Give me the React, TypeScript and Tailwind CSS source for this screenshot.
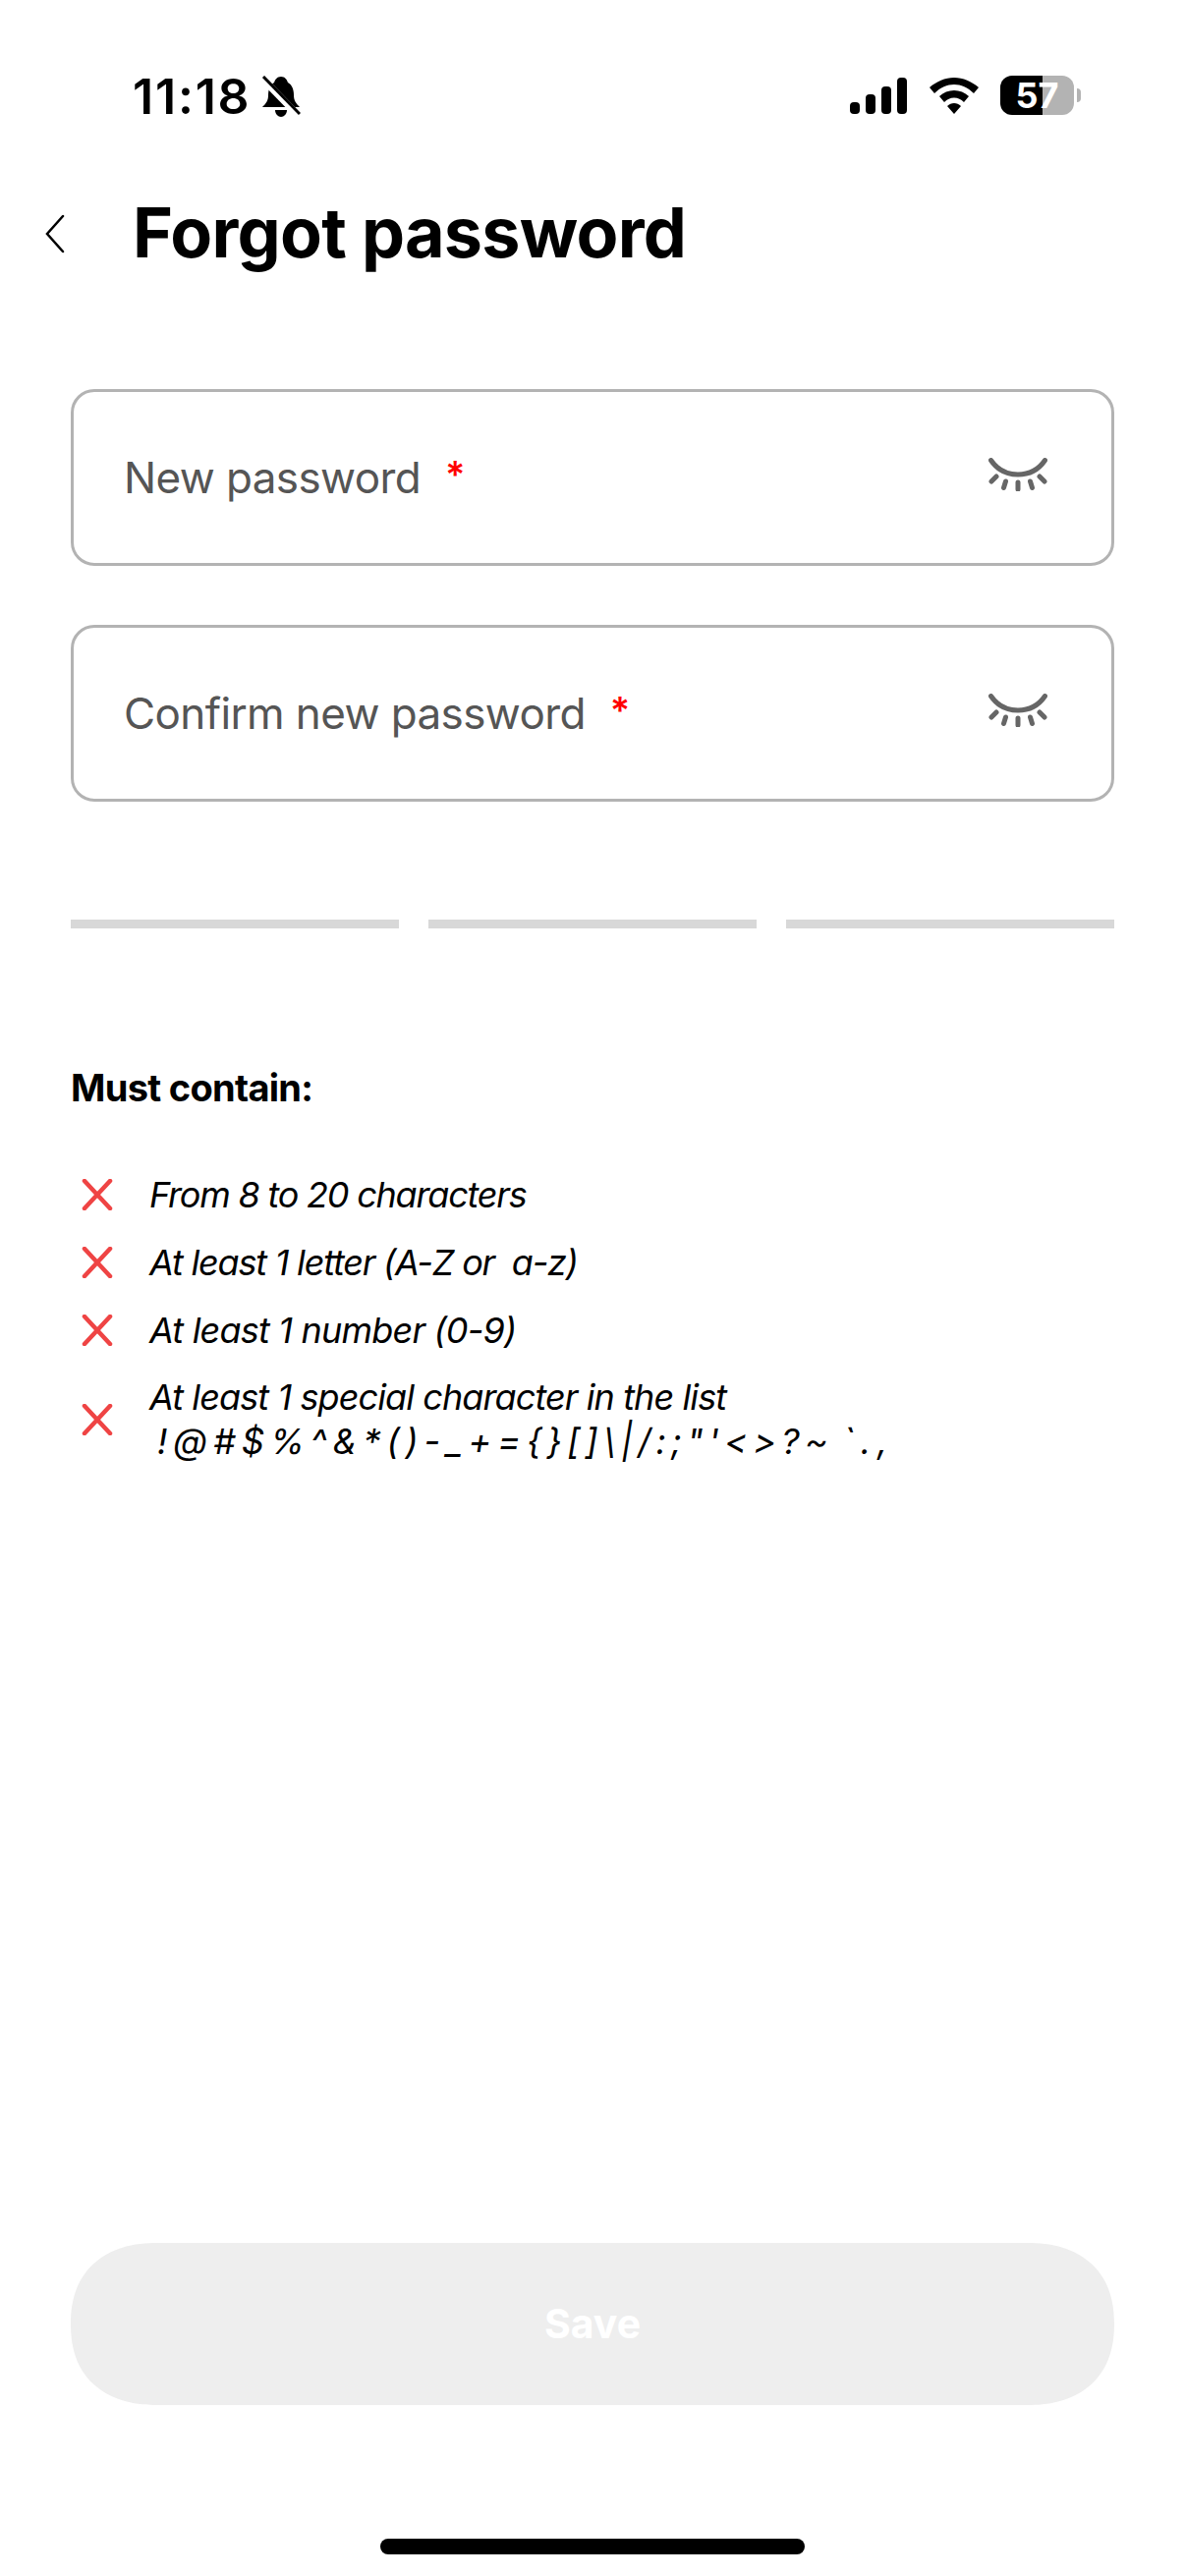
import React from "react";

const Eye = () => (
  <svg width="60" height="34" viewBox="0 0 60 34" fill="none" stroke="#666666" strokeLinecap="round" className="shrink-0">
    <path d="M2.500 2.500C9 12 18 17 30 17C42 17 51 12 57.500 2.500" strokeWidth="5" />
    <path d="M3 24L8 19M15.500 30.500L17.500 24M30 32V25M44.500 30.500L42.500 24M57 24L52 19" strokeWidth="5" />
  </svg>
);

const Cross = () => (
  <svg width="32" height="32" viewBox="0 0 32 32" fill="none" stroke="#ef4444" strokeWidth="4.500" strokeLinecap="round" className="shrink-0">
    <path d="M3 2L29 30M29 2L3 30" />
  </svg>
);

const Field = ({ label }: { label: string }) => (
  <div className="h-[180px] rounded-[24px] border-[3px] border-[#b3b3b3] pl-[51px] pr-[65px] flex items-center justify-between">
    <div className="flex items-center">
      <span className="text-[44px] leading-none tracking-[-0.6px] text-[#555555]">{label}</span>
      <span className="ml-[25px] -mt-[6px] text-[38px] leading-none font-semibold text-[#ff0000]">*</span>
    </div>
    <div className="-mt-[6px] flex"><Eye /></div>
  </div>
);

const Rule = ({ text, track }: { text: string; track: string }) => (
  <div className="flex items-center h-[69px]">
    <div className="w-[80px] pl-[11px] flex"><Cross /></div>
    <span className={`text-[36px] leading-none italic whitespace-pre text-black ${track}`}>{text}</span>
  </div>
);

export default function App() {
  return (
    <div className="w-[1206px] h-[2622px] bg-white flex flex-col font-['Inter','Liberation_Sans',sans-serif] overflow-hidden">
      <div className="h-[190px] flex items-start justify-between pt-[73px] pl-[135px] pr-[106px]">
        <div className="flex items-center">
          <span className="text-[50px] leading-[50px] font-semibold tracking-[1.8px] text-black">11:18</span>
          <svg width="40" height="42" viewBox="0 0 40 42" className="ml-[11px]">
            <path d="M20 1C24 1 26 4 27 7C31 9 33 14 33 20C33 25 35 28 39 32H1C5 28 7 25 7 20C7 14 9 9 13 7C14 4 16 1 20 1Z" fill="black" />
            <path d="M14 35H26C26 39 23 42 20 42C17 42 14 39 14 35Z" fill="black" />
            <path d="M1 3L38 41" stroke="white" strokeWidth="7" />
            <path d="M2 1L39 39" stroke="black" strokeWidth="3" />
          </svg>
        </div>
        <div className="flex items-center pt-[4px]">
          <svg width="58" height="37" viewBox="0 0 58 37">
            <rect x="0" y="25" width="10" height="12" rx="4" fill="black" />
            <rect x="16" y="17" width="10" height="20" rx="4" fill="black" />
            <rect x="32" y="9" width="10" height="28" rx="4" fill="black" />
            <rect x="48" y="0" width="10" height="37" rx="4" fill="black" />
          </svg>
          <svg width="50" height="37" viewBox="0 0 50 37" className="ml-[23px]">
            <path d="M25 0C34 0 43 4 50 10L45 16C39 10 32 7 25 7C18 7 11 10 5 16L0 10C7 4 16 0 25 0Z" fill="black" />
            <path d="M25 13C30.500 13 36 15 40 19L35 25C32 22 29 20.500 25 20.500C21 20.500 18 22 15 25L10 19C14 15 19.500 13 25 13Z" fill="black" />
            <path d="M25 26C27.500 26 30 27 32 29L25 37L18 29C20 27 22.500 26 25 26Z" fill="black" />
          </svg>
          <div className="relative ml-[22px] w-[75px] h-[40px] flex">
            <div className="w-[43px] bg-black rounded-l-[12px]" />
            <div className="w-[32px] bg-[#b3b3b3] rounded-r-[12px]" />
            <span className="absolute inset-0 flex items-center justify-center text-[36px] leading-[40px] font-bold text-white">57</span>
          </div>
          <div className="ml-[3px] w-[4px] h-[14px] rounded-r-full bg-[#b3b3b3]" />
        </div>
      </div>

      <div className="h-[96px] flex items-center pl-[46px]">
        <svg width="20" height="40" viewBox="0 0 20 40" fill="none" stroke="black" strokeWidth="2.500" strokeLinecap="round" className="shrink-0">
          <path d="M18 2L2 20L18 38" />
        </svg>
        <h1 className="ml-[69px] -mt-[3px] text-[70px] leading-none font-bold tracking-[-0.75px] text-black">Forgot password</h1>
      </div>

      <div className="mx-[72px] mt-[110px] flex flex-col gap-[60px]">
        <Field label="New password" />
        <Field label="Confirm new password" />
      </div>

      <div className="mx-[72px] mt-[120px] grid grid-cols-3 gap-[30px]">
        <div className="h-[9px] bg-[#d8d8d8]" />
        <div className="h-[9px] bg-[#d8d8d8]" />
        <div className="h-[9px] bg-[#d8d8d8]" />
      </div>

      <div className="mx-[72px] mt-[140px] text-[38px] leading-[44px] font-bold tracking-[-0.7px] text-black">Must contain:</div>

      <div className="mx-[72px] mt-[52px] flex flex-col">
        <Rule text="From 8 to 20 characters" track="tracking-[-1.2px]" />
        <Rule text="At least 1 letter (A-Z or  a-z)" track="tracking-[-1.2px]" />
        <Rule text="At least 1 number (0-9)" track="tracking-[-0.8px]" />
        <div className="flex items-center mt-[12px]">
          <div className="w-[80px] pl-[11px] flex"><Cross /></div>
          <div className="flex flex-col text-[36px] leading-[45px] italic tracking-[-1px] text-black">
            <span className="tracking-[-0.9px]">At least 1 special character in the list</span>
            <span className="pl-[8px] whitespace-pre tracking-[-1.2px]">
              <span className="[word-spacing:-1.8px]">{"! @ # $ % ^ & * ( ) - _ + = "}</span>
              <span className="[word-spacing:-2.5px]">{"{ } [ ] \\ | / : ; \" ' < > ? "}</span>
              <span className="[word-spacing:-1px]">{"~  ` . ,"}</span>
            </span>
          </div>
        </div>
      </div>

      <div className="flex-1" />

      <div className="mx-[72px] h-[165px] rounded-[88px/82.5px] [corner-shape:superellipse(1.2)] bg-[#eeeeee] flex items-center justify-center text-[41px] leading-none font-bold text-white">Save</div>

      <div className="mt-[136px] mb-[22px] mx-auto w-[432px] h-[16px] rounded-full bg-black" />
    </div>
  );
}
